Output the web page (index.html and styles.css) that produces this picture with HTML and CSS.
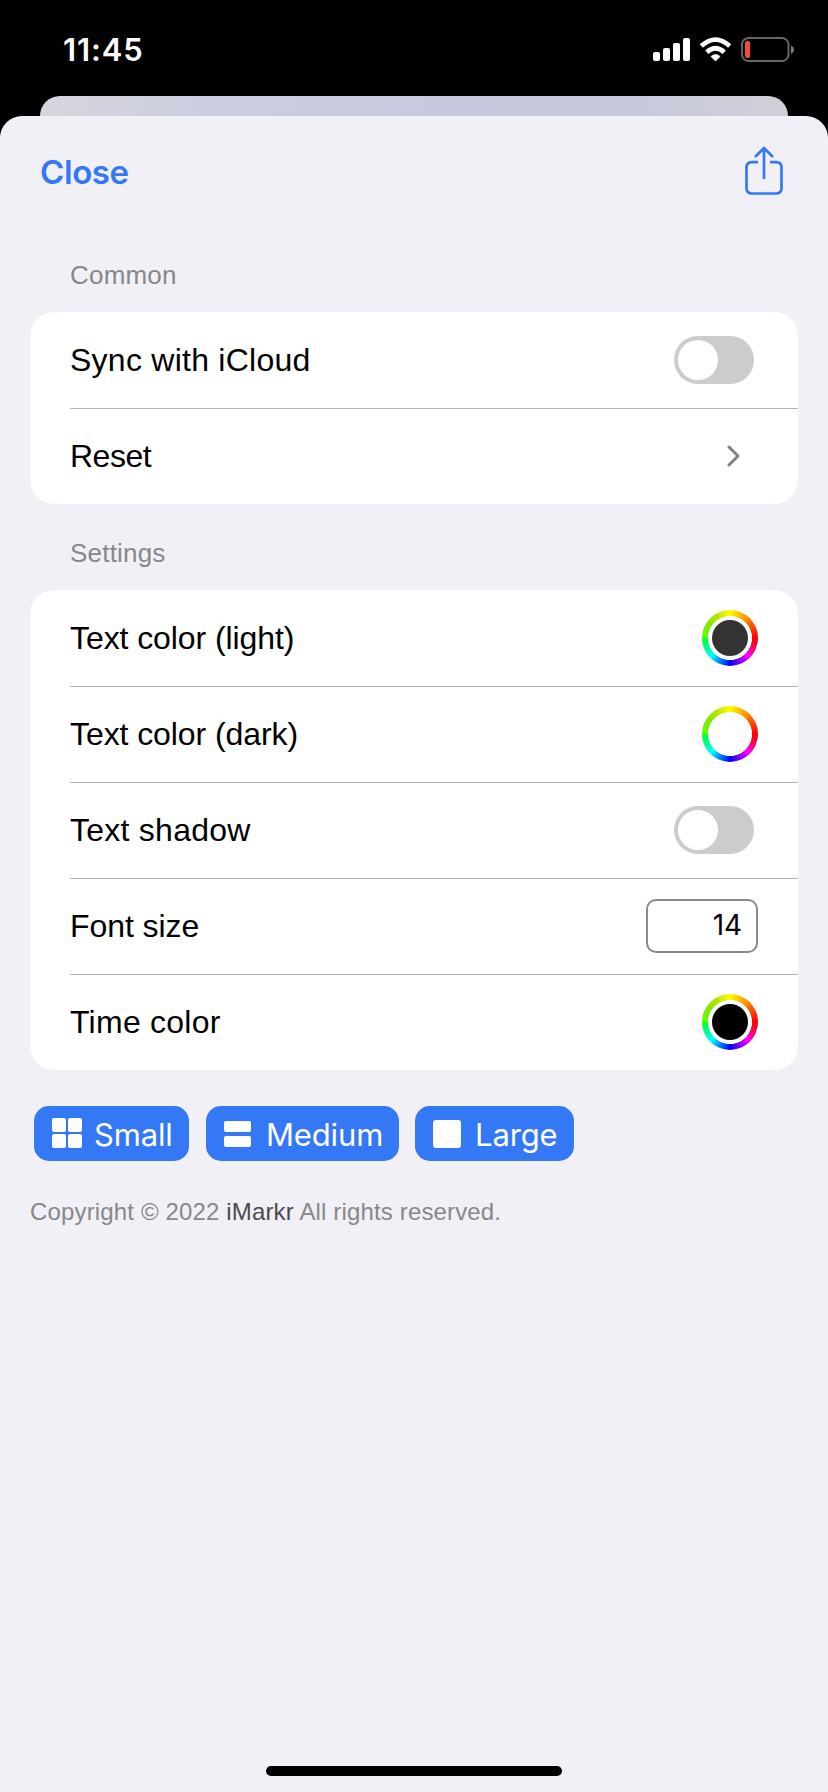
FILE: index.html
```html
<!DOCTYPE html>
<html lang="en">
<head>
<meta charset="utf-8">
<title>Settings</title>
<link rel="stylesheet" href="styles.css">
</head>
<body>
<header class="status-bar">
  <time class="clock">11:45</time>
  <svg class="status-icons" width="144" height="28" viewBox="0 0 144 28">
    <g fill="#fff">
      <rect x="1" y="15" width="7" height="9" rx="2"/>
      <rect x="11" y="11" width="7" height="13" rx="2"/>
      <rect x="21" y="6" width="7" height="18" rx="2"/>
      <rect x="31" y="1" width="7" height="23" rx="2"/>
      <path d="M63.500 24 L59 19.500 Q63.500 15.700 68 19.500Z" stroke="#fff" stroke-width=".8" stroke-linejoin="round"/>
    </g>
    <g fill="none" stroke="#fff" stroke-width="4.600">
      <path d="M49.300 9 Q63.500 -3.800 77.700 9"/>
      <path d="M54.800 15.200 Q63.500 7.300 72.200 15.200"/>
    </g>
    <rect x="90" y="1" width="46.500" height="23" rx="6.500" fill="none" stroke="#666" stroke-width="2"/>
    <rect x="93" y="4" width="5.200" height="17" rx="2.200" fill="#eb4e3d"/>
    <path d="M139 8.500Q142 10 142 12.700T139 17Z" fill="#808080"/>
  </svg>
</header>
<div class="back-sheet"></div>
<main class="sheet">
  <nav class="toolbar">
    <a class="close">Close</a>
    <svg width="38" height="50" viewBox="0 0 38 50" fill="none" stroke="#3478f6" stroke-width="2.700">
      <path d="M13 16.200H7Q1.500 16.200 1.500 21.700V42.300Q1.500 47.500 7 47.500H31Q36.500 47.500 36.500 42.300V21.700Q36.500 16.200 31 16.200H25"/>
      <path d="M19 32V2.500M10.800 10.200L19 2L27.200 10.200" stroke-linecap="round" stroke-linejoin="round"/>
    </svg>
  </nav>
  <h2 class="section-title">Common</h2>
  <section class="card">
    <div class="row"><span class="loose">Sync with iCloud</span><i class="toggle"></i></div>
    <div class="row"><span class="tight">Reset</span>
      <svg class="chevron" width="14" height="24" viewBox="0 0 14 24" fill="none" stroke="#848488" stroke-width="3" stroke-linecap="round" stroke-linejoin="round"><path d="M2 3L11 12L2 21"/></svg>
    </div>
  </section>
  <h2 class="section-title settings-title">Settings</h2>
  <section class="card">
    <div class="row"><span>Text color (light)</span><i class="swatch"><b class="fill charcoal"></b></i></div>
    <div class="row"><span>Text color (dark)</span><i class="swatch"><b class="fill white"></b></i></div>
    <div class="row"><span class="loose">Text shadow</span><i class="toggle"></i></div>
    <div class="row"><span>Font size</span><div class="number-field">14</div></div>
    <div class="row"><span class="loose">Time color</span><i class="swatch"><b class="fill black"></b></i></div>
  </section>
  <div class="sizes">
    <div class="size small">
      <svg width="30" height="30" fill="#fff"><rect width="14" height="14" rx="2"/><rect x="16" width="14" height="14" rx="2"/><rect y="16" width="14" height="14" rx="2"/><rect x="16" y="16" width="14" height="14" rx="2"/></svg>
      <span>Small</span>
    </div>
    <div class="size medium">
      <svg width="30" height="30" fill="#fff"><rect y="3" width="27" height="11" rx="2"/><rect y="18" width="27" height="11" rx="2"/></svg>
      <span>Medium</span>
    </div>
    <div class="size large">
      <svg width="30" height="30" fill="#fff"><rect y="2" width="28" height="28" rx="3"/></svg>
      <span>Large</span>
    </div>
  </div>
  <footer class="copyright">Copyright © 2022 <strong>iMarkr</strong> All rights reserved.</footer>
  <div class="home-indicator"></div>
</main>
</body>
</html>
```
FILE: styles.css
```css
* { box-sizing: border-box; }
body {
  margin: 0;
  width: 828px;
  height: 1792px;
  display: flex;
  flex-direction: column;
  overflow: hidden;
  background: #000;
  color: #000;
  font-family: "Liberation Sans", Arial, sans-serif;
}
svg { display: block; flex: none; }
.status-bar {
  height: 96px;
  padding: 29px 32px 0 63px;
  display: flex;
  justify-content: space-between;
}
.clock {
  font: 600 31px/42px Inter, sans-serif;
  letter-spacing: .9px;
  color: #fff;
}
.status-icons { margin-top: 8px; }
.back-sheet {
  height: 20px;
  margin: 0 40px;
  border-radius: 20px 20px 0 0;
  background: linear-gradient(90deg, #d6d6dd, #cccde0 22%, #c7c9de 55%, #c8c9dc 80%, #d0d0d9);
}
.sheet {
  flex: 1;
  display: flex;
  flex-direction: column;
  padding: 0 30px;
  border-radius: 22px 22px 0 0;
  background: #f1f0f6;
}
.toolbar {
  height: 120px;
  padding: 30px 15px 0 10px;
  display: flex;
  justify-content: space-between;
}
.close {
  font: 600 33px/52px Inter, sans-serif;
  letter-spacing: -.4px;
  color: #3478f6;
}
.section-title {
  height: 76px;
  margin: 0;
  padding: 24px 0 0 40px;
  font-size: 26px;
  font-weight: 400;
  line-height: 30px;
  letter-spacing: .2px;
  color: #88878c;
}
.settings-title { height: 86px; padding-top: 34px; }
.card {
  border-radius: 24px;
  background: #fff;
}
.row {
  height: 96px;
  margin-left: 40px;
  padding-right: 40px;
  display: flex;
  align-items: center;
  justify-content: space-between;
  font-size: 32px;
  letter-spacing: -.08px;
}
.row + .row { box-shadow: inset 0 1px #b3b3b5; }
.loose { letter-spacing: .25px; }
.tight { letter-spacing: -.5px; }
.toggle {
  width: 80px;
  height: 48px;
  margin-right: 4px;
  padding: 4px;
  border-radius: 24px;
  background: #ccc;
}
.toggle::before {
  content: "";
  display: block;
  width: 40px;
  height: 40px;
  border-radius: 50%;
  background: #fff;
}
.chevron { margin-right: 17px; }
.swatch {
  width: 56px;
  height: 56px;
  display: grid;
  place-items: center;
  border-radius: 50%;
  background:
    radial-gradient(circle, #fff 21.700px, transparent 22.300px),
    conic-gradient(#ff0, #ff8000 12.500%, #ff3000 20%, #f00 25%, #f05 31%, #f0f 37.500%, #00f 50%, #0ff 62.500%, #0f3 74%, #6f0 76%, #80e600 83%, #b0e600 91%, #ff0);
}
.fill {
  width: 36px;
  height: 36px;
  border-radius: 50%;
}
.charcoal { background: #333; }
.white { background: #fff; }
.black { background: #000; }
.number-field {
  width: 112px;
  height: 54px;
  padding-right: 14px;
  border: 2px solid #8a898e;
  border-radius: 10px;
  font: 400 28px/49px Inter, sans-serif;
  text-align: right;
}
.sizes {
  display: flex;
  margin: 36px 0 0 4px;
}
.size {
  height: 55px;
  padding-left: 18px;
  display: flex;
  align-items: center;
  gap: 12px;
  border-radius: 15px;
  background: #3478f6;
  color: #fff;
  font: 400 31px/55px Inter, sans-serif;
  letter-spacing: -.15px;
}
.size svg { margin-bottom: 1px; }
.size span { padding-top: 2px; }
.small { width: 155px; }
.medium { width: 193px; margin-left: 17px; }
.large { width: 159px; margin-left: 16px; }
.copyright {
  margin-top: 37px;
  font-size: 24px;
  line-height: 28px;
  letter-spacing: .15px;
  color: #88878c;
}
.copyright strong { font-weight: 400; color: #4b4a50; }
.home-indicator {
  width: 296px;
  height: 10px;
  margin: auto auto 16px;
  border-radius: 5px;
  background: #000;
}
```
